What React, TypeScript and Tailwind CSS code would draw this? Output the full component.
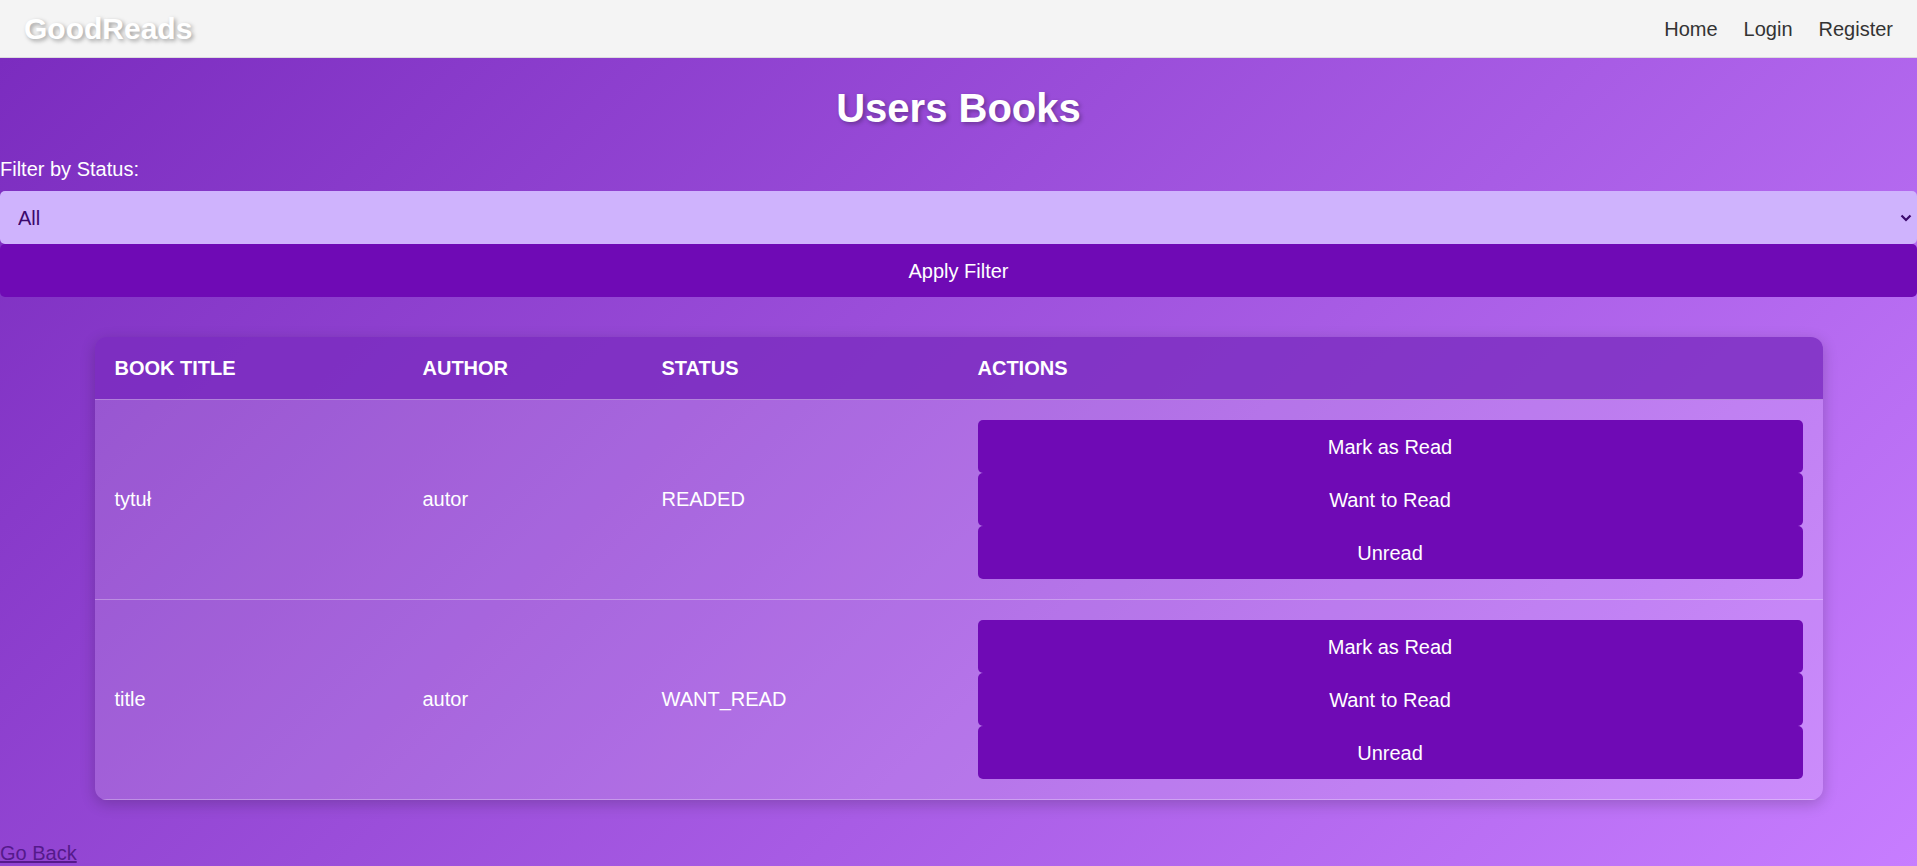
import React from "react";

const books = [
  { title: "tytuł", author: "autor", status: "READED" },
  { title: "title", author: "autor", status: "WANT_READ" },
];

export default function App() {
  return (
    <div className="min-h-[866px] font-['Liberation_Sans',Arial,sans-serif] text-[20px]">
      <nav className="h-[58px] bg-[#f4f4f4] border-b border-[#dcdcdc] flex items-center justify-between px-[24px]">
        <div className="text-[30px] font-bold text-white leading-none [text-shadow:2px_2px_4px_rgba(0,0,0,0.35)]">
          GoodReads
        </div>
        <div className="flex items-center gap-[26px] text-[20px] text-[#333]">
          <a className="cursor-pointer">Home</a>
          <a className="cursor-pointer">Login</a>
          <a className="cursor-pointer">Register</a>
        </div>
      </nav>
      <main className="min-h-[808px] bg-[linear-gradient(135deg,#7b2cbf,#c77dff)] flex flex-col">
        <h1 className="my-[27px] text-center text-[40px] leading-[46px] font-bold text-white [text-shadow:2px_2px_4px_rgba(0,0,0,0.3)]">
          Users Books
        </h1>
        <label className="block text-white leading-[23px] mb-[10px]">Filter by Status:</label>
        <div className="relative">
          <select className="block w-full h-[53px] appearance-none rounded-[5px] bg-[#cfb3fd] text-[#3c096c] text-[20px] pl-[18px] outline-none">
            <option>All</option>
          </select>
          <svg
            className="absolute right-[5px] top-[23px] pointer-events-none"
            width="12"
            height="8"
            viewBox="0 0 12 8"
          >
            <path d="M1.5 1.5 L6 6 L10.5 1.5" fill="none" stroke="#3c096c" strokeWidth="2.2" />
          </svg>
        </div>
        <button className="w-full h-[53px] rounded-[5px] bg-[#6f0ab5] text-white text-[20px]">
          Apply Filter
        </button>

        <div className="w-[1728px] mx-auto mt-[40px] mb-[38px] rounded-[12px] overflow-hidden shadow-[0_4px_15px_rgba(0,0,0,0.2)] text-white">
          <div className="grid grid-cols-[308px_239px_316px_1fr] bg-[#7b2cbf]/80 border-b border-white/40">
            {["Book Title", "Author", "Status", "Actions"].map((h) => (
              <div key={h} className="px-[20px] pt-[20px] pb-[19px] font-bold uppercase leading-[23px]">
                {h}
              </div>
            ))}
          </div>
          {books.map((b, i) => (
            <div
              key={i}
              className="grid grid-cols-[308px_239px_316px_1fr] items-center bg-white/15 border-b border-white/30"
            >
              <div className="p-[20px] leading-[23px]">{b.title}</div>
              <div className="p-[20px] leading-[23px]">{b.author}</div>
              <div className="p-[20px] leading-[23px]">{b.status}</div>
              <div className="p-[20px] flex flex-col">
                {["Mark as Read", "Want to Read", "Unread"].map((a) => (
                  <button
                    key={a}
                    className="h-[53px] w-full rounded-[5px] bg-[#6f0ab5] text-white text-[20px]"
                  >
                    {a}
                  </button>
                ))}
              </div>
            </div>
          ))}
        </div>

        <div>
          <a className="text-[#551a8b] underline leading-[23px] cursor-pointer">Go Back</a>
        </div>
      </main>
    </div>
  );
}
